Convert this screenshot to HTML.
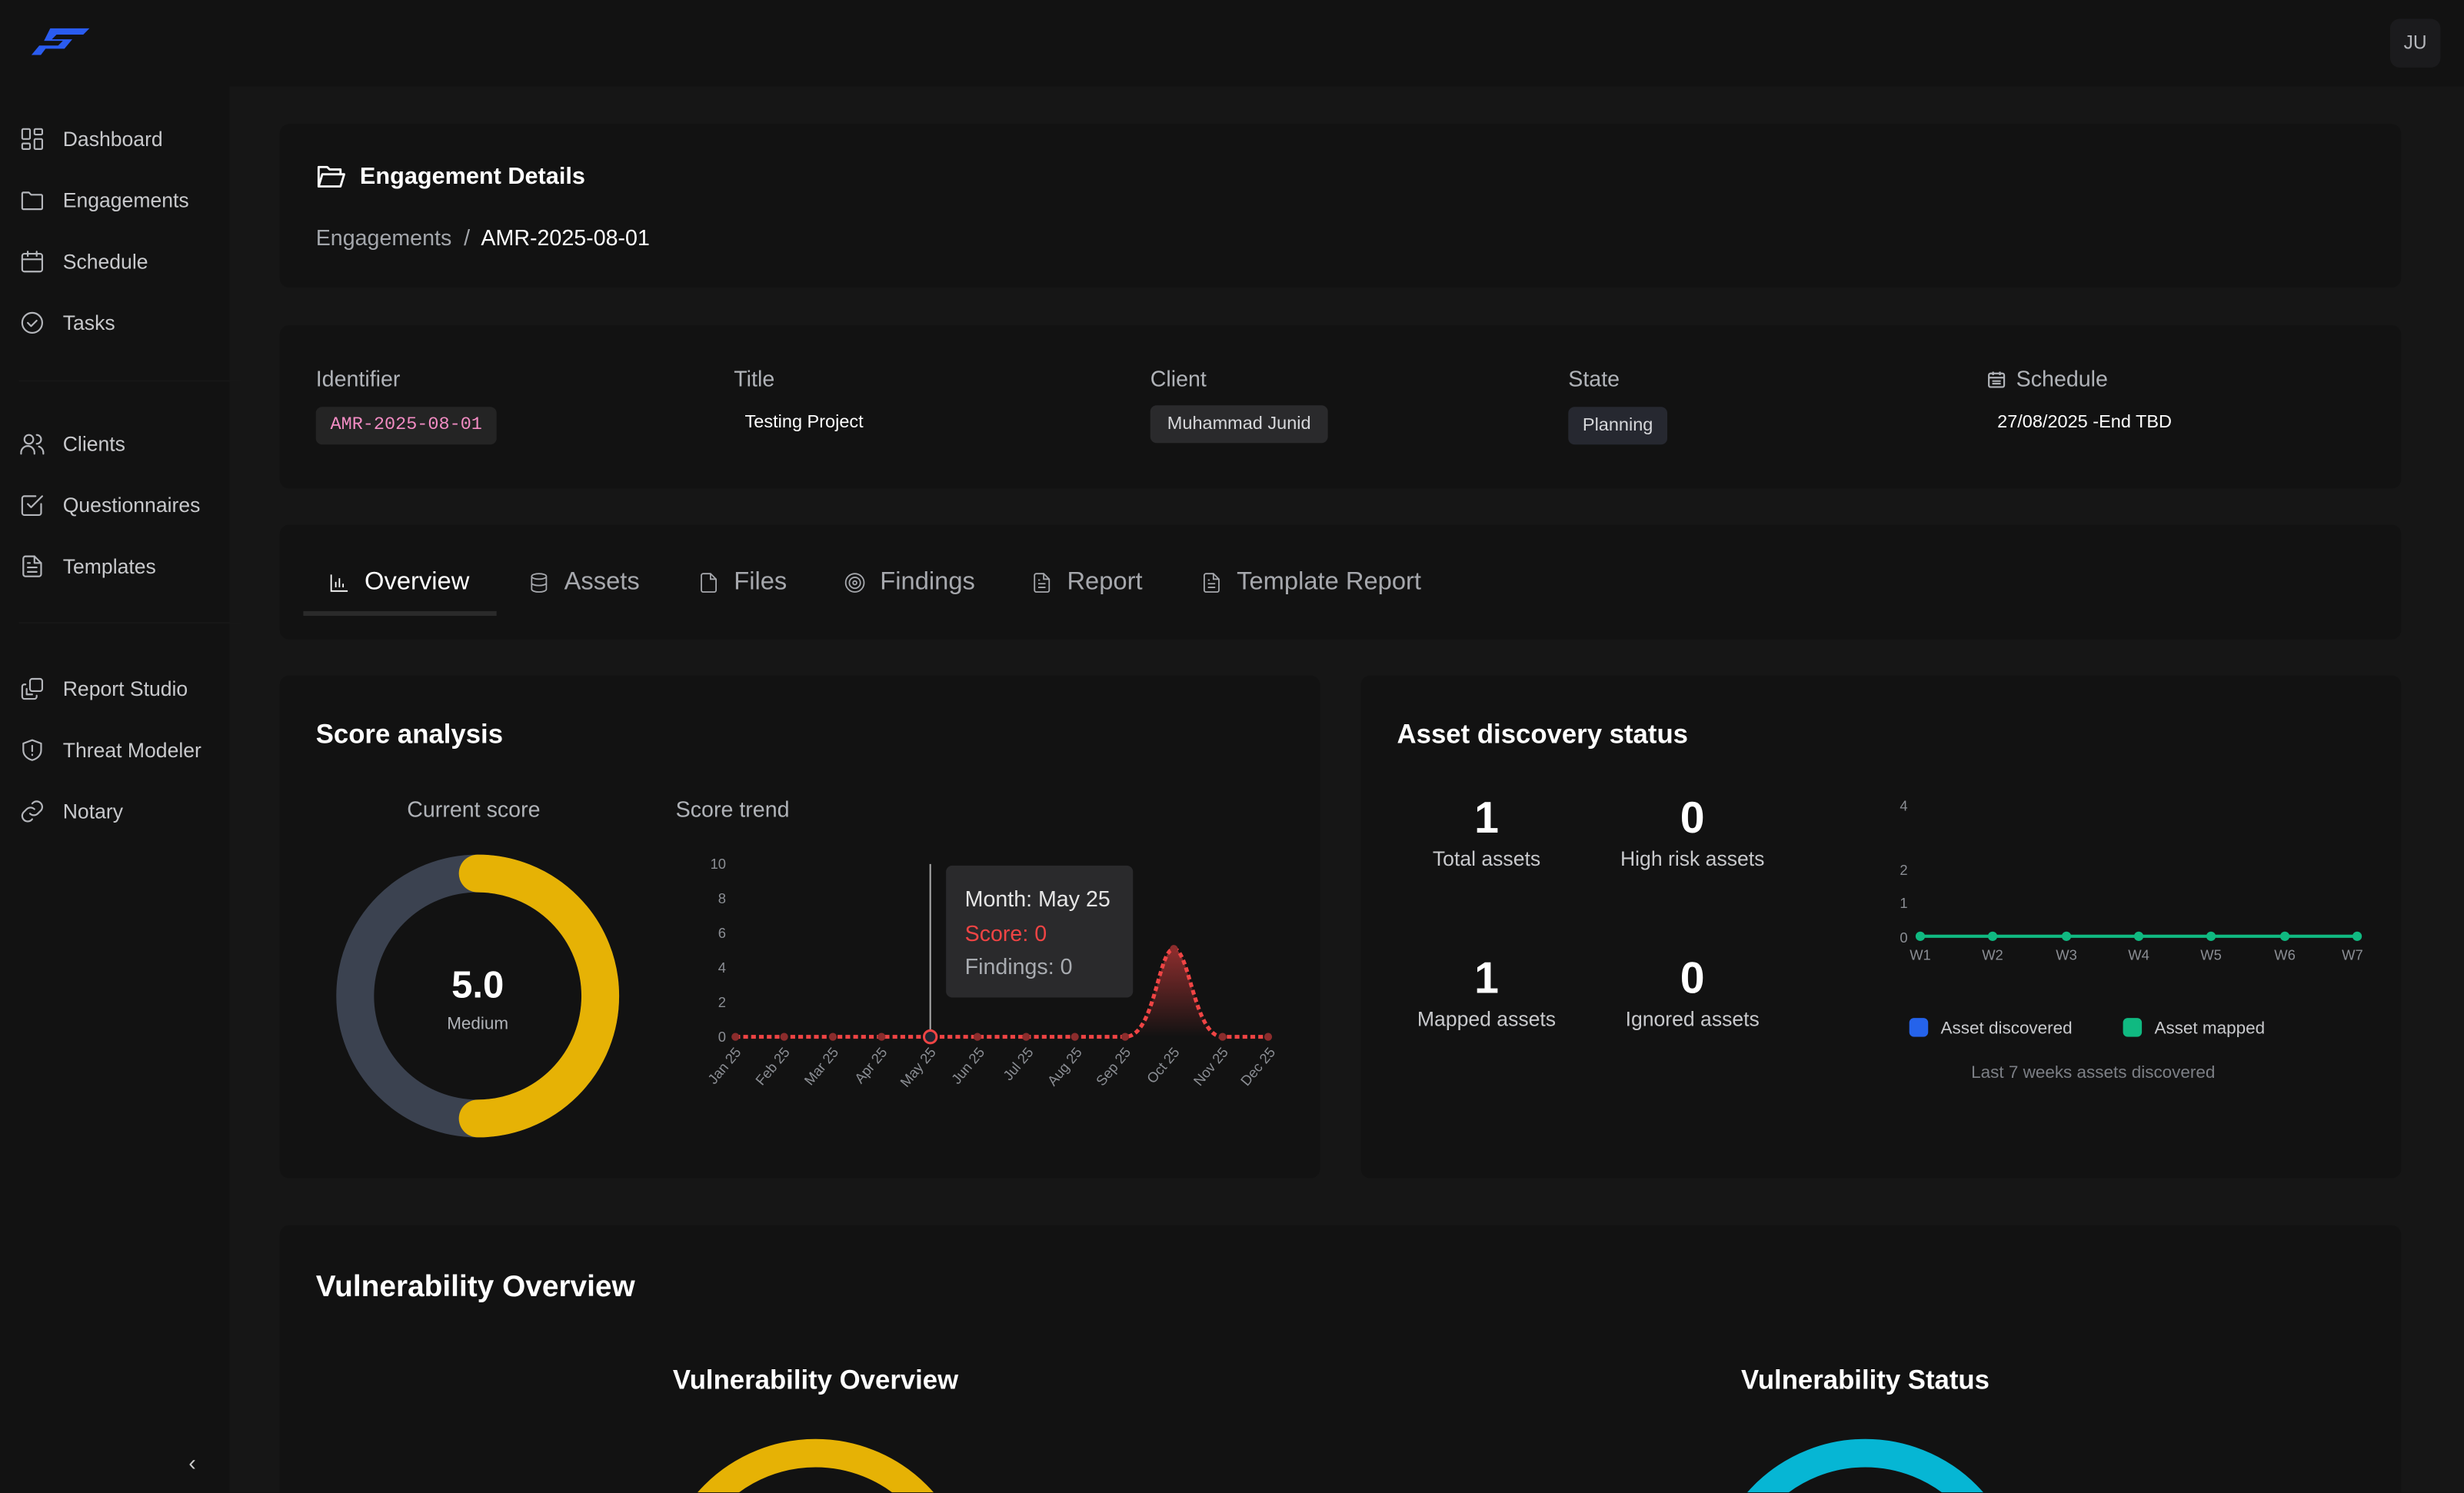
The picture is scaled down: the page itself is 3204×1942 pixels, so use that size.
<!DOCTYPE html>
<html><head><meta charset="utf-8">
<style>
*{box-sizing:border-box;margin:0;padding:0}
html,body{width:3204px;height:1942px;overflow:hidden;background:#121212}
#s{position:absolute;left:0;top:0;width:1568px;height:950px;overflow:hidden;transform:scale(2.04337);transform-origin:0 0;font-family:"Liberation Sans",sans-serif;color:#fff;background:#121212}
.a{position:absolute}
.main{left:146px;top:55px;width:1422px;height:895px;background:#161616}
.card{position:absolute;background:#121212;border-radius:6px}
.nav{position:absolute;left:12px;font-size:13px;color:#c8c9cc;display:flex;align-items:center}
.nav svg{width:17px;height:17px;margin-right:11px;stroke:#b4b6bb;fill:none;stroke-width:1.5;stroke-linecap:round;stroke-linejoin:round}
.lbl{font-size:14px;color:#b0b3b8}
.tab{position:absolute;top:362px;font-size:16px;color:#a6a8ad;display:flex;align-items:center}
.tab svg{width:14px;height:14px;margin-right:9px;stroke:#a6a8ad;fill:none;stroke-width:1.5}
.ax{font-size:9px;fill:#8b8e94;font-family:"Liberation Sans",sans-serif}
</style></head><body><div id="s">
<svg class="a" style="left:20px;top:18px" width="38" height="18" viewBox="0 0 38 18"><path d="M12 0H37L33 4H16L13 7H26L21 13H9L6 17H0L5 11H17L20 8H8Z" fill="#2a5cf0"/></svg>
<div class="a" style="left:1521px;top:12px;width:32px;height:31px;border-radius:6px;background:#1b1b1d;font-size:12px;color:#b4b6bb;text-align:center;line-height:31px">JU</div>
<div class="a main"></div>
<div class="nav" style="top:80px"><svg viewBox="0 0 24 24"><rect x="3" y="3" width="7" height="9" rx="1"/><rect x="14" y="3" width="7" height="5" rx="1"/><rect x="14" y="12" width="7" height="9" rx="1"/><rect x="3" y="16" width="7" height="5" rx="1"/></svg>Dashboard</div>
<div class="nav" style="top:119px"><svg viewBox="0 0 24 24"><path d="M3 6a1 1 0 0 1 1-1h5l2 2h9a1 1 0 0 1 1 1v11a1 1 0 0 1-1 1H4a1 1 0 0 1-1-1z"/></svg>Engagements</div>
<div class="nav" style="top:158px"><svg viewBox="0 0 24 24"><rect x="3" y="5" width="18" height="16" rx="2"/><path d="M3 10h18M8 3v4M16 3v4"/></svg>Schedule</div>
<div class="nav" style="top:197px"><svg viewBox="0 0 24 24"><circle cx="12" cy="12" r="9"/><path d="M8 12l3 3 5-5"/></svg>Tasks</div>
<div class="a" style="left:12px;top:242px;width:142px;height:1px;background:#171717"></div>
<div class="nav" style="top:274px"><svg viewBox="0 0 24 24"><circle cx="9" cy="8" r="4"/><path d="M2 21v-1a6 6 0 0 1 12 0v1M16 4a4 4 0 0 1 0 8M22 21v-1a6 6 0 0 0-4-5.6"/></svg>Clients</div>
<div class="nav" style="top:313px"><svg viewBox="0 0 24 24"><path d="M20 11v8a2 2 0 0 1-2 2H5a2 2 0 0 1-2-2V6a2 2 0 0 1 2-2h10"/><path d="M8 11l3 3 10-10"/></svg>Questionnaires</div>
<div class="nav" style="top:352px"><svg viewBox="0 0 24 24"><path d="M14 3H6a2 2 0 0 0-2 2v14a2 2 0 0 0 2 2h12a2 2 0 0 0 2-2V9z"/><path d="M14 3v6h6M8 13h8M8 17h8M8 9h2"/></svg>Templates</div>
<div class="a" style="left:12px;top:396px;width:142px;height:1px;background:#171717"></div>
<div class="nav" style="top:430px"><svg viewBox="0 0 24 24"><rect x="10" y="3" width="11" height="11" rx="2"/><path d="M6 8H5a2 2 0 0 0-2 2v9a2 2 0 0 0 2 2h9a2 2 0 0 0 2-2v-1M7 12v5h5"/></svg>Report Studio</div>
<div class="nav" style="top:469px"><svg viewBox="0 0 24 24"><path d="M12 3l8 3v6c0 5-4 8-8 9-4-1-8-4-8-9V6z"/><path d="M12 8v5M12 16v.5"/></svg>Threat Modeler</div>
<div class="nav" style="top:508px"><svg viewBox="0 0 24 24"><path d="M10 14a5 5 0 0 0 7 0l3-3a5 5 0 0 0-7-7l-1 1"/><path d="M14 10a5 5 0 0 0-7 0l-3 3a5 5 0 0 0 7 7l1-1"/></svg>Notary</div>
<div class="a" style="left:120px;top:923px;font-size:14px;color:#ccc">&#8249;</div>

<div class="card" style="left:178px;top:79px;width:1350px;height:104px"></div>
<svg class="a" style="left:201px;top:104px" width="19" height="17" viewBox="0 0 24 22" fill="none" stroke="#fff" stroke-width="1.8" stroke-linejoin="round"><path d="M2 19V3h7l2 2h9v4"/><path d="M2 19l3-10h18l-3 10z"/></svg>
<div class="a" style="left:229px;top:104px;font-size:15px;font-weight:bold">Engagement Details</div>
<div class="a" style="left:201px;top:143px;font-size:14px;color:#a3a6ab">Engagements &nbsp;/&nbsp; <span style="color:#fff">AMR-2025-08-01</span></div>

<div class="card" style="left:178px;top:207px;width:1350px;height:104px"></div>
<div class="a lbl" style="left:201px;top:233px">Identifier</div>
<div class="a lbl" style="left:467px;top:233px">Title</div>
<div class="a lbl" style="left:732px;top:233px">Client</div>
<div class="a lbl" style="left:998px;top:233px">State</div>
<svg class="a" style="left:1264px;top:235px" width="13" height="13" viewBox="0 0 24 24" fill="none" stroke="#b0b3b8" stroke-width="2"><rect x="3" y="5" width="18" height="16" rx="2"/><path d="M3 10h18M8 3v4M16 3v4M7 14h10M7 17h10"/></svg>
<div class="a lbl" style="left:1283px;top:233px">Schedule</div>
<div class="a" style="left:201px;top:259px;width:115px;height:24px;border-radius:4px;background:#242424;font-family:'Liberation Mono',monospace;font-size:11.5px;color:#f28cc3;line-height:24px;text-align:center">AMR-2025-08-01</div>
<div class="a" style="left:474px;top:263px;font-size:11.5px">Testing Project</div>
<div class="a" style="left:732px;top:258px;width:113px;height:24px;border-radius:4px;background:#2a2a2c;font-size:11.5px;color:#d6d7da;line-height:24px;text-align:center">Muhammad Junid</div>
<div class="a" style="left:998px;top:259px;width:63px;height:24px;border-radius:4px;background:#262830;font-size:11.5px;color:#d6d7da;line-height:24px;text-align:center">Planning</div>
<div class="a" style="left:1271px;top:263px;font-size:11.5px">27/08/2025 -End TBD</div>

<div class="card" style="left:178px;top:334px;width:1350px;height:73px"></div>
<div class="tab" style="left:209px;color:#fff"><svg viewBox="0 0 24 24" style="stroke:#fff"><path d="M3 3v18h18M8 17v-6M12 17V7M16 17v-4"/></svg>Overview</div>
<div class="a" style="left:193px;top:389px;width:123px;height:3px;background:#2a2a2a"></div>
<div class="tab" style="left:336px"><svg viewBox="0 0 24 24"><ellipse cx="12" cy="5" rx="8" ry="3"/><path d="M4 5v14c0 1.7 3.6 3 8 3s8-1.3 8-3V5M4 12c0 1.7 3.6 3 8 3s8-1.3 8-3"/></svg>Assets</div>
<div class="tab" style="left:444px"><svg viewBox="0 0 24 24"><path d="M14 2H6a2 2 0 0 0-2 2v16a2 2 0 0 0 2 2h12a2 2 0 0 0 2-2V8z"/><path d="M14 2v6h6"/></svg>Files</div>
<div class="tab" style="left:537px"><svg viewBox="0 0 24 24"><circle cx="12" cy="12" r="10"/><circle cx="12" cy="12" r="6"/><circle cx="12" cy="12" r="2"/></svg>Findings</div>
<div class="tab" style="left:656px"><svg viewBox="0 0 24 24"><path d="M14 2H6a2 2 0 0 0-2 2v16a2 2 0 0 0 2 2h12a2 2 0 0 0 2-2V8z"/><path d="M14 2v6h6M8 13h8M8 17h8M8 9h2"/></svg>Report</div>
<div class="tab" style="left:764px"><svg viewBox="0 0 24 24"><path d="M14 2H6a2 2 0 0 0-2 2v16a2 2 0 0 0 2 2h12a2 2 0 0 0 2-2V8z"/><path d="M14 2v6h6M8 13h8M8 17h8M8 9h2"/></svg>Template Report</div>

<div class="card" style="left:178px;top:430px;width:662px;height:320px"></div>
<div class="a" style="left:201px;top:458px;font-size:17px;font-weight:bold">Score analysis</div>
<div class="a" style="left:259px;top:507px;font-size:14px;color:#b0b3b8">Current score</div>
<div class="a" style="left:430px;top:507px;font-size:14px;color:#b0b3b8">Score trend</div>
<svg class="a" style="left:0;top:0" width="1568" height="950">
<circle cx="304" cy="634" r="78" fill="none" stroke="#3b4250" stroke-width="24"/>
<path d="M304 556A78 78 0 0 1 304 712" fill="none" stroke="#e6b205" stroke-width="24" stroke-linecap="round"/>
<text x="304" y="635" text-anchor="middle" font-size="24" font-weight="bold" fill="#fff" font-family="Liberation Sans">5.0</text>
<text x="304" y="655" text-anchor="middle" font-size="11" fill="#b0b3b8" font-family="Liberation Sans">Medium</text>
<g class="ax" text-anchor="end"><text x="462" y="553">10</text><text x="462" y="575">8</text><text x="462" y="597">6</text><text x="462" y="619">4</text><text x="462" y="641">2</text><text x="462" y="663">0</text></g>
<defs><linearGradient id="g" x1="0" y1="0" x2="0" y2="1"><stop offset="0" stop-color="#ef4444" stop-opacity=".55"/><stop offset="1" stop-color="#ef4444" stop-opacity="0"/></linearGradient></defs>
<path d="M716 660C735 660 737 604 747 604S760 660 778 660Z" fill="url(#g)"/>
<line x1="592" y1="550" x2="592" y2="660" stroke="#aaa" stroke-width="1"/>
<path d="M468 660H716C735 660 737 604 747 604S760 660 778 660H807" fill="none" stroke="#ef4444" stroke-width="2.5" stroke-dasharray="3 2"/>
<g fill="#8b2c2c"><circle cx="468" cy="660" r="2.5"/><circle cx="499" cy="660" r="2.5"/><circle cx="530" cy="660" r="2.5"/><circle cx="561" cy="660" r="2.5"/><circle cx="622" cy="660" r="2.5"/><circle cx="653" cy="660" r="2.5"/><circle cx="684" cy="660" r="2.5"/><circle cx="716" cy="660" r="2.5"/><circle cx="747" cy="604" r="2.5"/><circle cx="778" cy="660" r="2.5"/><circle cx="807" cy="660" r="2.5"/></g>
<circle cx="592" cy="660" r="4" fill="#1e2430" stroke="#ef4444" stroke-width="1.5"/>
<g class="ax" text-anchor="end">
<text transform="translate(472,670) rotate(-50)">Jan 25</text><text transform="translate(503,670) rotate(-50)">Feb 25</text><text transform="translate(534,670) rotate(-50)">Mar 25</text><text transform="translate(565,670) rotate(-50)">Apr 25</text><text transform="translate(596,670) rotate(-50)">May 25</text><text transform="translate(627,670) rotate(-50)">Jun 25</text><text transform="translate(658,670) rotate(-50)">Jul 25</text><text transform="translate(689,670) rotate(-50)">Aug 25</text><text transform="translate(720,670) rotate(-50)">Sep 25</text><text transform="translate(751,670) rotate(-50)">Oct 25</text><text transform="translate(782,670) rotate(-50)">Nov 25</text><text transform="translate(812,670) rotate(-50)">Dec 25</text></g>
<rect x="602" y="551" width="119" height="84" rx="4" fill="#2a2a2c"/>
<text x="614" y="577" font-size="14" fill="#e5e5e5" font-family="Liberation Sans">Month: May 25</text>
<text x="614" y="599" font-size="14" fill="#ef4444" font-family="Liberation Sans">Score: 0</text>
<text x="614" y="620" font-size="14" fill="#a8abb0" font-family="Liberation Sans">Findings: 0</text>
</svg>

<div class="card" style="left:866px;top:430px;width:662px;height:320px"></div>
<div class="a" style="left:889px;top:458px;font-size:17px;font-weight:bold">Asset discovery status</div>
<div class="a" style="left:896px;top:505px;width:100px;text-align:center"><div style="font-size:28px;font-weight:bold">1</div><div style="font-size:13px;color:#c8c9cc;margin-top:2px">Total assets</div></div>
<div class="a" style="left:1017px;top:505px;width:120px;text-align:center"><div style="font-size:28px;font-weight:bold">0</div><div style="font-size:13px;color:#c8c9cc;margin-top:2px">High risk assets</div></div>
<div class="a" style="left:891px;top:607px;width:110px;text-align:center"><div style="font-size:28px;font-weight:bold">1</div><div style="font-size:13px;color:#c8c9cc;margin-top:2px">Mapped assets</div></div>
<div class="a" style="left:1017px;top:607px;width:120px;text-align:center"><div style="font-size:28px;font-weight:bold">0</div><div style="font-size:13px;color:#c8c9cc;margin-top:2px">Ignored assets</div></div>
<svg class="a" style="left:0;top:0" width="1568" height="950">
<g class="ax" text-anchor="end"><text x="1214" y="516">4</text><text x="1214" y="557">2</text><text x="1214" y="578">1</text><text x="1214" y="600">0</text></g>
<line x1="1222" y1="596" x2="1500" y2="596" stroke="#10b981" stroke-width="2"/>
<g fill="#10b981"><circle cx="1222" cy="596" r="3"/><circle cx="1268" cy="596" r="3"/><circle cx="1315" cy="596" r="3"/><circle cx="1361" cy="596" r="3"/><circle cx="1407" cy="596" r="3"/><circle cx="1454" cy="596" r="3"/><circle cx="1500" cy="596" r="3"/></g>
<g class="ax" text-anchor="middle"><text x="1222" y="611">W1</text><text x="1268" y="611">W2</text><text x="1315" y="611">W3</text><text x="1361" y="611">W4</text><text x="1407" y="611">W5</text><text x="1454" y="611">W6</text><text x="1497" y="611">W7</text></g>
<rect x="1215" y="648" width="12" height="12" rx="3" fill="#2563eb"/>
<text x="1235" y="658" font-size="11" fill="#c8c9cc" font-family="Liberation Sans">Asset discovered</text>
<rect x="1351" y="648" width="12" height="12" rx="3" fill="#10b981"/>
<text x="1371" y="658" font-size="11" fill="#c8c9cc" font-family="Liberation Sans">Asset mapped</text>
<text x="1332" y="686" text-anchor="middle" font-size="11" fill="#7c7f85" font-family="Liberation Sans">Last 7 weeks assets discovered</text>
</svg>

<div class="card" style="left:178px;top:780px;width:1350px;height:170px;border-radius:6px 6px 0 0"></div>
<div class="a" style="left:201px;top:809px;font-size:19px;font-weight:bold">Vulnerability Overview</div>
<div class="a" style="left:319px;top:869px;width:400px;text-align:center;font-size:17px;font-weight:bold">Vulnerability Overview</div>
<div class="a" style="left:987px;top:869px;width:400px;text-align:center;font-size:17px;font-weight:bold">Vulnerability Status</div>
<svg class="a" style="left:0;top:0" width="1568" height="950">
<circle cx="519" cy="1016" r="91" fill="none" stroke="#e6b205" stroke-width="18"/>
<circle cx="1187" cy="1016" r="91" fill="none" stroke="#06b6d4" stroke-width="18"/>
</svg>
</div></body></html>
